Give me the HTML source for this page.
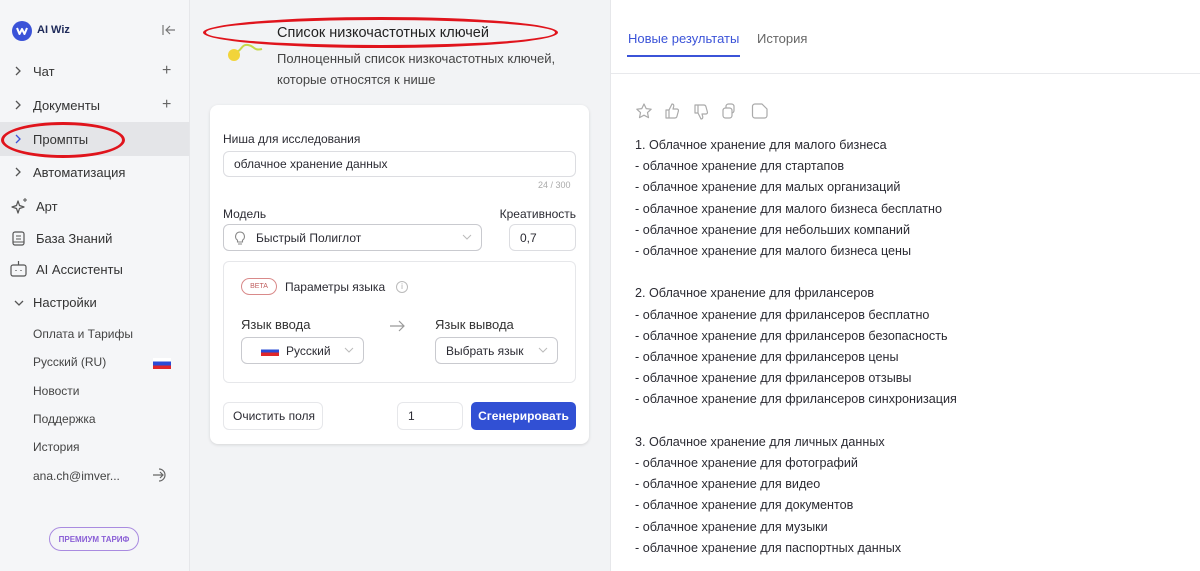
<!DOCTYPE html>
<html><head><meta charset="utf-8"><style>
*{box-sizing:border-box;margin:0;padding:0}
body{width:1200px;height:571px;overflow:hidden;font-family:"Liberation Sans","Noto Sans CJK SC",sans-serif;background:#f2f3f5;color:#2b2b33;position:relative;font-size:13px}
.abs{position:absolute}
.sb{left:0;top:0;width:190px;height:571px;background:#f5f6f8;border-right:1px solid #e6e7ea}
.it{position:absolute;left:0;width:189px;height:34px;display:flex;align-items:center;font-size:13px;color:#333}
.chev{position:absolute;left:14px;top:12px}
.lbl{position:absolute;left:33px}
.plus{position:absolute;left:162px;font-size:16px;color:#666}
.sub{position:absolute;left:33px;font-size:12px;color:#444}
.mid{left:190px;top:0;width:420px;height:571px;background:#f2f3f5}
.card{left:210px;top:105px;width:379px;height:339px;background:#fff;border-radius:8px;box-shadow:0 1px 3px rgba(0,0,0,.12)}
.inp{position:absolute;border:1px solid #dcdde1;border-radius:6px;background:#fff;font-size:12px;display:flex;align-items:center;padding-left:10px}
.dd{position:absolute;right:9px;top:9px}
.right{left:610px;top:0;width:590px;height:571px;background:#fff;border-left:1px solid #e6e7ea}
.res{position:absolute;left:635px;top:135px;font-size:12.6px;line-height:21.2px;color:#2b2b33}
</style></head><body>
<div class="abs sb">
 <svg class="abs" style="left:12px;top:21px" width="20" height="20"><circle cx="10" cy="10" r="10" fill="#3b53d8"/><path d="M5 7l2.5 6 2.5-5 2.5 5L15 7" stroke="#fff" stroke-width="2" fill="none" stroke-linejoin="round"/></svg>
 <div class="abs" style="left:37px;top:24px;font-size:11px;font-weight:bold;color:#1e2a5a">AI Wiz</div>
 <svg class="abs" style="left:162px;top:24px" width="14" height="12"><path d="M1 1v10M13 6H4M8 2L4 6l4 4" stroke="#777" stroke-width="1.2" fill="none"/></svg>
 <div class="it" style="top:54px"><svg class="chev" width="8" height="10"><path d="M2 1l4 4-4 4" stroke="#555" stroke-width="1.3" fill="none"/></svg><span class="lbl">Чат</span><span class="plus">+</span></div>
 <div class="it" style="top:88px"><svg class="chev" width="8" height="10"><path d="M2 1l4 4-4 4" stroke="#555" stroke-width="1.3" fill="none"/></svg><span class="lbl">Документы</span><span class="plus">+</span></div>
 <div class="it" style="top:122px;background:#e4e5e8"><svg class="chev" width="8" height="10"><path d="M2 1l4 4-4 4" stroke="#3b53d8" stroke-width="1.3" fill="none"/></svg><span class="lbl">Промпты</span></div>
 <div class="abs" style="left:1px;top:122px;width:124px;height:36px;border:3px solid #e0141c;border-radius:50%"></div>
 <div class="it" style="top:155px"><svg class="chev" width="8" height="10"><path d="M2 1l4 4-4 4" stroke="#555" stroke-width="1.3" fill="none"/></svg><span class="lbl">Автоматизация</span></div>
 <div class="it" style="top:189px"><svg class="abs" style="left:11px;top:8px" width="18" height="18"><path d="M7 4l1.5 4.5L13 10l-4.5 1.5L7 16l-1.5-4.5L1 10l4.5-1.5z" stroke="#555" stroke-width="1.2" fill="none" stroke-linejoin="round"/><path d="M14 1v4M12 3h4" stroke="#555" stroke-width="1"/></svg><span class="lbl" style="left:36px">Арт</span></div>
 <div class="it" style="top:221px"><svg class="abs" style="left:12px;top:10px" width="13" height="15"><rect x="1" y="1" width="11" height="13" rx="2" stroke="#555" stroke-width="1.2" fill="none"/><path d="M4 5h5M4 8h5M1 11h11" stroke="#555" stroke-width="1.1"/></svg><span class="lbl" style="left:36px">База Знаний</span></div>
 <div class="it" style="top:252px"><svg class="abs" style="left:10px;top:8px" width="17" height="17"><rect x="1" y="5" width="15" height="11" rx="2" stroke="#555" stroke-width="1.2" fill="none"/><path d="M8.5 1v4M6 10v1M11 10v1" stroke="#555" stroke-width="1.2"/></svg><span class="lbl" style="left:36px">AI Ассистенты</span></div>
 <div class="it" style="top:285px"><svg class="chev" width="10" height="8" style="top:14px"><path d="M1 2l4 4 4-4" stroke="#555" stroke-width="1.3" fill="none"/></svg><span class="lbl">Настройки</span></div>
 <div class="sub" style="top:327px">Оплата и Тарифы</div>
 <div class="sub" style="top:355px">Русский (RU)</div>
 <div class="abs" style="left:153px;top:358px;width:18px;height:11px;background:linear-gradient(#fff 0 33%,#2a4bd6 33% 66%,#e0262a 66%)"></div>
 <div class="sub" style="top:384px">Новости</div>
 <div class="sub" style="top:412px">Поддержка</div>
 <div class="sub" style="top:440px">История</div>
 <div class="sub" style="top:469px">ana.ch@imver...</div>
 <svg class="abs" style="left:152px;top:467px" width="18" height="16"><path d="M1 8h10M8 5l3 3-3 3" stroke="#666" stroke-width="1.2" fill="none"/><path d="M7 2a6 6 0 1 1 0 12" stroke="#666" stroke-width="1.2" fill="none"/></svg>
 <div class="abs" style="left:49px;top:527px;width:90px;height:24px;border:1px solid #a98be0;border-radius:12px;font-size:8px;font-weight:bold;color:#8a5fd6;display:flex;align-items:center;justify-content:center">ПРЕМИУМ ТАРИФ</div>
</div>
<div class="abs mid"></div>
<svg class="abs" style="left:224px;top:40px" width="50" height="25"><path d="M12 12c6-1 5-8 12-7s5 6 14 4" stroke="#c7d94a" stroke-width="2" fill="none"/><circle cx="10" cy="15" r="6" fill="#f2d43a"/></svg>
<div class="abs" style="left:203px;top:17px;width:355px;height:31px;border:3px solid #e0141c;border-radius:50%"></div>
<div class="abs" style="left:277px;top:25px;font-size:14.5px;color:#222">Список низкочастотных ключей</div>
<div class="abs" style="left:277px;top:48px;font-size:13px;line-height:21px;color:#444">Полноценный список низкочастотных ключей,<br>которые относятся к нише</div>
<div class="abs card">
 <div class="abs" style="left:13px;top:27px;font-size:12px">Ниша для исследования</div>
 <div class="inp" style="left:13px;top:46px;width:353px;height:26px">облачное хранение данных</div>
 <div class="abs" style="left:328px;top:75px;font-size:9px;color:#aaa">24 / 300</div>
 <div class="abs" style="left:13px;top:102px;font-size:12px">Модель</div>
 <div class="abs" style="right:13px;top:102px;font-size:12px">Креативность</div>
 <div class="inp" style="left:13px;top:119px;width:259px;height:27px;border-color:#c9cacf;padding-left:10px"><svg width="12" height="14" style="margin-right:10px"><path d="M6 1a4.5 4.5 0 0 0-2.5 8.2V11h5V9.2A4.5 4.5 0 0 0 6 1zM4 13h4" stroke="#888" stroke-width="1.1" fill="none"/></svg>Быстрый Полиглот<svg class="dd" width="10" height="7"><path d="M1 1l4 4 4-4" stroke="#bbb" fill="none"/></svg></div>
 <div class="inp" style="left:299px;top:119px;width:67px;height:27px">0,7</div>
 <div class="abs" style="left:13px;top:156px;width:353px;height:122px;border:1px solid #e6e7ea;border-radius:6px">
  <div class="abs" style="left:17px;top:16px;width:36px;height:17px;border:1px solid #d98a8a;border-radius:9px;font-size:7px;color:#c06060;display:flex;align-items:center;justify-content:center">BETA</div>
  <div class="abs" style="left:61px;top:18px;font-size:12px">Параметры языка</div>
  <div class="abs" style="left:172px;top:19px;width:12px;height:12px;border:1px solid #bbb;border-radius:50%;font-size:8px;color:#aaa;text-align:center;line-height:10px">i</div>
  <div class="abs" style="left:17px;top:55px;font-size:13px;color:#333">Язык ввода</div>
  <svg class="abs" style="left:166px;top:58px" width="16" height="12"><path d="M0 6h14M9 1l5 5-5 5" stroke="#999" stroke-width="1.2" fill="none"/></svg>
  <div class="abs" style="left:211px;top:55px;font-size:13px;color:#333">Язык вывода</div>
  <div class="inp" style="left:17px;top:75px;width:123px;height:27px;border-color:#c9cacf;padding-left:19px"><span style="width:18px;height:10px;background:linear-gradient(#fff 0 33%,#2a4bd6 33% 66%,#e0262a 66%);margin-right:7px"></span>Русский<svg class="dd" width="10" height="7"><path d="M1 1l4 4 4-4" stroke="#bbb" fill="none"/></svg></div>
  <div class="inp" style="left:211px;top:75px;width:123px;height:27px;border-color:#c9cacf">Выбрать язык<svg class="dd" width="10" height="7"><path d="M1 1l4 4 4-4" stroke="#bbb" fill="none"/></svg></div>
 </div>
 <div class="inp" style="left:13px;top:297px;width:100px;height:28px;border-color:#e6e7ea;padding-left:9px">Очистить поля</div>
 <div class="inp" style="left:187px;top:297px;width:66px;height:28px;border-color:#e6e7ea">1</div>
 <div class="abs" style="left:261px;top:297px;width:105px;height:28px;background:#3150d4;border-radius:5px;color:#fff;font-size:12px;font-weight:bold;display:flex;align-items:center;justify-content:center">Сгенерировать</div>
</div>
<div class="abs right">
 <div class="abs" style="left:17px;top:31px;font-size:13px;color:#3b53d8">Новые результаты</div>
 <div class="abs" style="left:16px;top:55px;width:113px;height:2px;background:#3b53d8"></div>
 <div class="abs" style="left:146px;top:31px;font-size:13px;color:#666">История</div>
 <div class="abs" style="left:0;top:73px;width:590px;height:1px;background:#e8e9ec"></div>
 <svg class="abs" style="left:24px;top:102px" width="140" height="20" fill="none" stroke="#aaa" stroke-width="1.2" stroke-linejoin="round">
  <path d="M9 2l2.2 4.6 5 .6-3.7 3.4 1 5L9 13.2 4.5 15.6l1-5L1.8 7.2l5-.6z"/>
  <path d="M31 8h3v8h-3zM34 8l3-6c1.5 0 2 1 1.7 2.5L38 7h4c1 0 1.7 1 1.4 2l-1.5 5.5c-.3 1-1 1.5-2 1.5H34"/>
  <path d="M60 11h3V3h-3zM63 11l3 6c1.5 0 2-1 1.7-2.5L67 12h4c1 0 1.7-1 1.4-2l-1.5-5.5c-.3-1-1-1.5-2-1.5H63"/>
  <rect x="88" y="6" width="9" height="10" rx="2.5"/><path d="M91 6V4.5A2.5 2.5 0 0 1 93.5 2h3A2.5 2.5 0 0 1 99 4.5v4a2.5 2.5 0 0 1-2 2.4"/>
  <path d="M120 2h7l5 5v6.5a2.5 2.5 0 0 1-2.5 2.5h-9.5a2.5 2.5 0 0 1-2.5-2.5v-9A2.5 2.5 0 0 1 120 2z"/>
 </svg>
</div>
<div class="res">1. Облачное хранение для малого бизнеса<br>- облачное хранение для стартапов<br>- облачное хранение для малых организаций<br>- облачное хранение для малого бизнеса бесплатно<br>- облачное хранение для небольших компаний<br>- облачное хранение для малого бизнеса цены<br><br>2. Облачное хранение для фрилансеров<br>- облачное хранение для фрилансеров бесплатно<br>- облачное хранение для фрилансеров безопасность<br>- облачное хранение для фрилансеров цены<br>- облачное хранение для фрилансеров отзывы<br>- облачное хранение для фрилансеров синхронизация<br><br>3. Облачное хранение для личных данных<br>- облачное хранение для фотографий<br>- облачное хранение для видео<br>- облачное хранение для документов<br>- облачное хранение для музыки<br>- облачное хранение для паспортных данных</div>
</body></html>
